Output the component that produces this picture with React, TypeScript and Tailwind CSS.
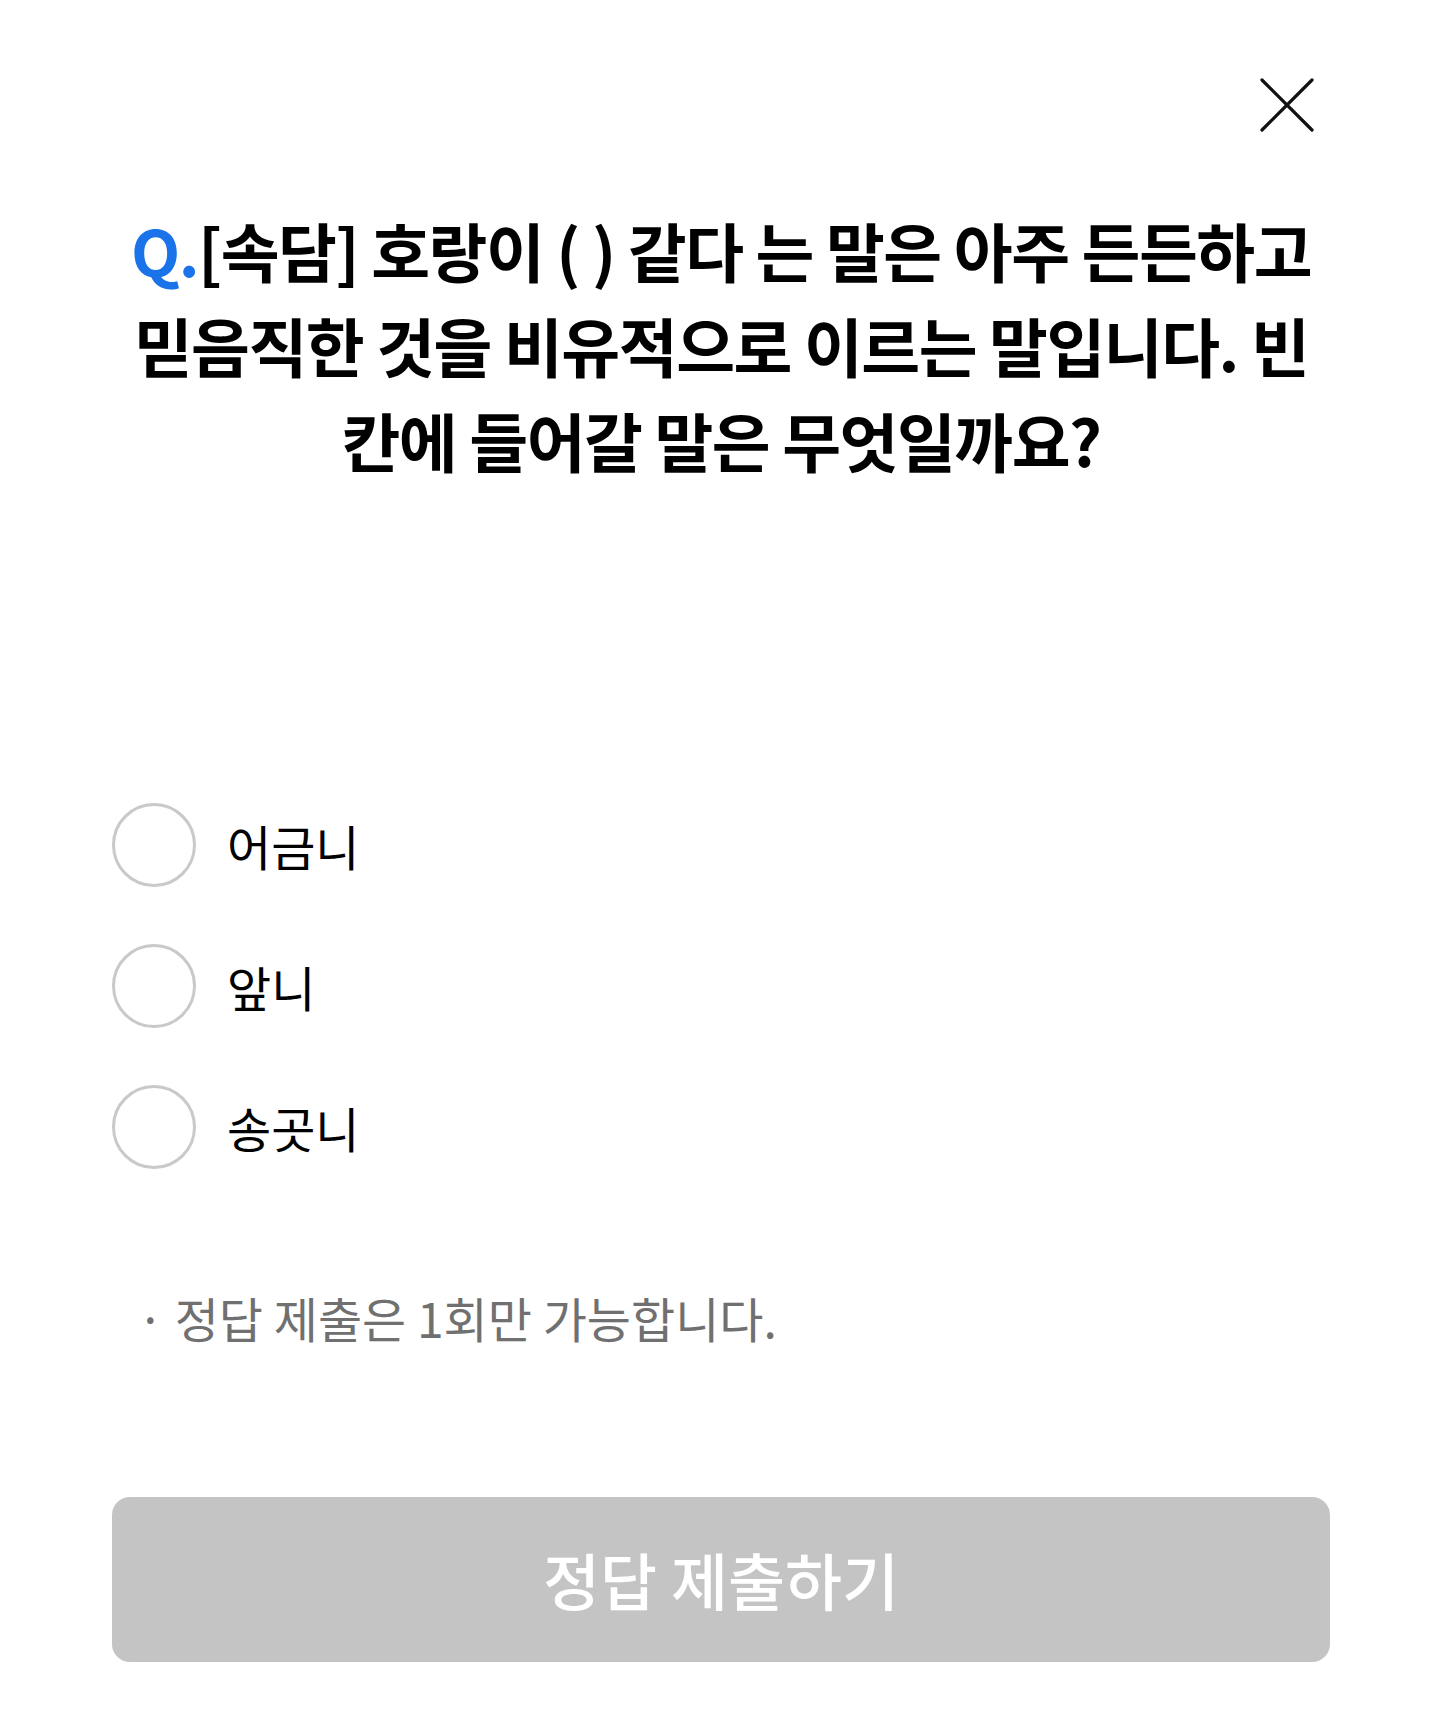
import { useState } from 'react';

const OPTIONS = ['어금니', '앞니', '송곳니'];

export default function App() {
  const [selected, setSelected] = useState<number | null>(null);

  return (
    <div className="min-h-[1721px] bg-white px-[112px] pr-[109px] font-['Noto_Sans_CJK_KR','Noto_Sans',sans-serif] text-black">
      <header className="flex justify-end pt-[78px] pr-[16px]">
        <button type="button" aria-label="닫기" className="h-[54px] w-[54px]">
          <svg width="54" height="54" viewBox="0 0 54 54" fill="none">
            <path d="M2 2L52 52M52 2L2 52" stroke="#111" strokeWidth="3.2" strokeLinecap="round" />
          </svg>
        </button>
      </header>

      <h1 className="mt-[70px] whitespace-nowrap text-center text-[64px] font-bold leading-[95px] tracking-[-1.5px]">
        <span className="text-[#1a73e8]">Q.</span>[속담] 호랑이 ( ) 같다 는 말은 아주 든든하고
        <br />
        믿음직한 것을 비유적으로 이르는 말입니다. 빈
        <br />
        칸에 들어갈 말은 무엇일까요?
      </h1>

      <div className="mt-[316px] flex flex-col gap-[57px]">
        {OPTIONS.map((opt, i) => (
          <label key={opt} className="flex h-[84px] cursor-pointer items-center gap-[31px]">
            <span
              onClick={() => setSelected(i)}
              className={`h-[84px] w-[84px] rounded-full border-[3px] ${
                selected === i ? 'border-[#1a73e8]' : 'border-[#c9c9c9]'
              }`}
            />
            <span className="text-[48px] leading-none">{opt}</span>
          </label>
        ))}
      </div>

      <p className="mt-[118px] pl-[25px] text-[48px] leading-[60px] text-[#707070]">· 정답 제출은 1회만 가능합니다.</p>

      <button
        type="button"
        disabled={selected === null}
        className="mt-[150px] h-[165px] w-full rounded-[18px] bg-[#c4c4c4] text-[62px] font-medium text-white"
      >
        정답 제출하기
      </button>
    </div>
  );
}
